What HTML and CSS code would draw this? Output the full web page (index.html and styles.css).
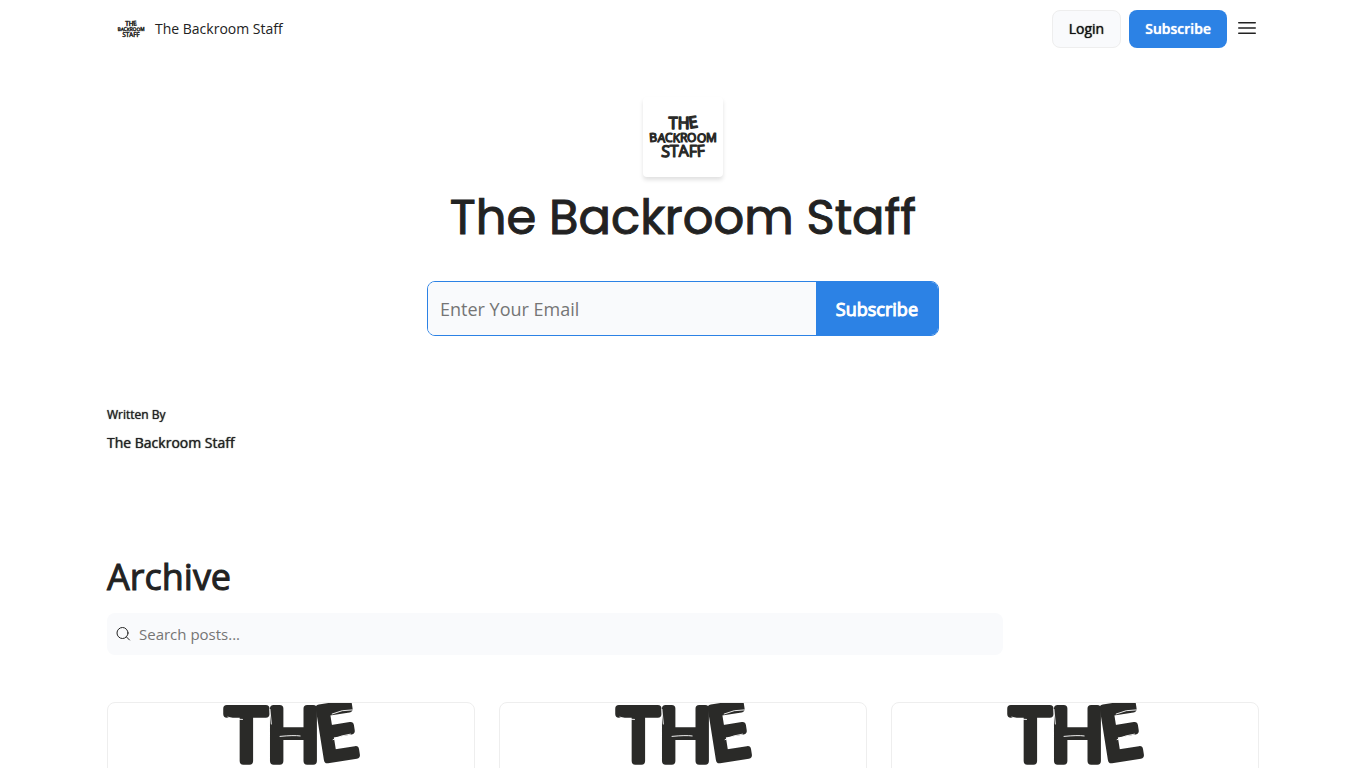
FILE: index.html
```html
<!DOCTYPE html>
<html lang="en">
  <head>
    <meta charset="UTF-8" />
    <meta name="viewport" content="width=device-width, initial-scale=1.0" />
    <title>The Backroom Staff</title>
    <link rel="stylesheet" href="styles.css">
  </head>
  <body>
    <!-- shared logo -->
    <svg class="sprite" aria-hidden="true">
      <symbol id="logo" viewBox="0 0 800 800" preserveAspectRatio="xMidYMid slice">
        <g class="logo-art">
          <text class="logo-the" x="406" y="316" rotate="0 0 -9">THE</text>
          <text class="logo-backroom" x="402" y="450" rotate="-4 3 0 3 0 -3 3 0">BACKROOM</text>
          <text class="logo-staff" x="402" y="597" rotate="3 0 -3 0 -4">STAFF</text>
        </g>
        <!-- dry brush streaks -->
        <g class="logo-streaks">
          <path d="M262 221q14 6 32 5" />
          <path d="M354 204l3 32" />
          <path d="M376 263q30 -3 44 -1" />
          <path d="M490 214q22 -10 44 -9" />
          <path d="M492 270q18 -10 38 -12" />
        </g>
      </symbol>
    </svg>

    <header class="navbar">
      <a class="brand" href="#">
        <svg class="brand-logo" aria-hidden="true"><use href="#logo" /></svg>
        <span>The Backroom Staff</span>
      </a>
      <div class="nav-actions">
        <button class="btn btn-light" type="button">Login</button>
        <button class="btn btn-primary" type="button">Subscribe</button>
        <button class="menu-btn" type="button" aria-label="Menu">
          <svg width="24" height="24" viewBox="0 0 24 24" fill="none" stroke="currentColor" stroke-width="1.5" stroke-linecap="round">
            <path d="M3.75 5.75h16.5M3.75 11h16.5M3.75 16.25h16.5" />
          </svg>
        </button>
      </div>
    </header>

    <main class="container">
      <section class="hero">
        <svg class="hero-logo" aria-hidden="true"><use href="#logo" /></svg>
        <h1>The Backroom Staff</h1>
        <form class="subscribe-form">
          <input type="email" placeholder="Enter Your Email" aria-label="Email" required />
          <button type="submit">Subscribe</button>
        </form>
      </section>

      <section class="authors">
        <p class="authors-label">Written By</p>
        <p class="authors-name">The Backroom Staff</p>
      </section>

      <section class="archive">
        <h2>Archive</h2>
        <label class="search">
          <svg width="16" height="16" viewBox="0 0 16 16" fill="none" stroke="currentColor" stroke-linecap="round">
            <circle cx="7.5" cy="7" r="5.5" />
            <path d="M11.5 11l3 3" />
          </svg>
          <input type="text" placeholder="Search posts..." aria-label="Search posts" />
        </label>
        <div class="posts">
          <a class="post" href="#" aria-label="Post"><svg class="post-image"><use href="#logo" /></svg></a>
          <a class="post" href="#" aria-label="Post"><svg class="post-image"><use href="#logo" /></svg></a>
          <a class="post" href="#" aria-label="Post"><svg class="post-image"><use href="#logo" /></svg></a>
        </div>
      </section>
    </main>
  </body>
</html>
```
FILE: styles.css
```css
* {
  box-sizing: border-box;
}

body {
  margin: 0;
  font-family: "Open Sans", "Noto Sans", sans-serif;
  font-size: 14px;
  line-height: 20px;
  color: #222;
  background-color: #fff;
}

h1,
h2,
p {
  margin: 0;
}

button,
input {
  font-family: inherit;
}

button {
  cursor: pointer;
}

.sprite {
  display: none;
}

.logo-art {
  font-family: "Open Sans", sans-serif;
  font-weight: 400;
  fill: #2a2a28;
  stroke: #2a2a28;
  stroke-width: 12;
  stroke-linecap: round;
  stroke-linejoin: round;
  text-anchor: middle;
}

.logo-the {
  font-size: 160px;
  stroke-width: 16;
}

.logo-backroom {
  font-size: 120px;
}

.logo-staff {
  font-size: 160px;
}

.logo-streaks {
  fill: none;
  stroke: #fff;
  stroke-width: 2;
  stroke-linecap: round;
}

.navbar,
.container {
  max-width: 1152px;
  margin: 0 auto;
}

.navbar {
  display: flex;
  align-items: center;
  justify-content: space-between;
  height: 57px;
  padding: 0 0 0 8px;
}

.brand {
  display: flex;
  align-items: center;
  gap: 8px;
  color: inherit;
  text-decoration: none;
}

.brand-logo {
  width: 32px;
  height: 32px;
}

.nav-actions {
  display: flex;
  align-items: center;
  gap: 8px;
}

.btn {
  height: 38px;
  padding: 0 16px;
  border: 1px solid transparent;
  border-radius: 8px;
  font-size: 14px;
  font-weight: 400;
  line-height: 20px;
  text-shadow: 0 0 1px currentColor;
}

.btn-light {
  background-color: #f9fafc;
  border-color: #eee;
  color: #111;
}

.btn-primary {
  padding: 0 15px;
  background-color: #2c82e5;
  color: #fff;
  font-weight: 600;
}

.menu-btn {
  display: flex;
  padding: 0;
  border: none;
  background: none;
  color: #222;
}

.hero {
  display: flex;
  flex-direction: column;
  align-items: center;
  padding: 40px 0 64px;
}

.hero-logo {
  width: 80px;
  height: 80px;
  border-radius: 4px;
  box-shadow: 0 3px 4px rgba(0, 0, 0, 0.12);
}

.hero h1 {
  margin: 9px 0 31px;
  font-family: Poppins, Inter, sans-serif;
  font-size: 48px;
  font-weight: 400;
  line-height: 64px;
  -webkit-text-stroke: 1px currentColor;
}

.subscribe-form {
  display: flex;
  width: 100%;
  max-width: 512px;
  height: 55px;
  border: 1px solid #2c82e5;
  border-radius: 8px;
  overflow: hidden;
}

.subscribe-form input {
  flex: 1;
  min-width: 0;
  padding: 0 12px;
  border: none;
  background-color: #f9fafc;
  font-size: 18px;
}

.subscribe-form button {
  padding: 0 20px;
  border: none;
  background-color: #2c82e5;
  color: #fff;
  font-size: 18px;
  font-weight: 400;
  -webkit-text-stroke: 1px currentColor;
}

input::placeholder {
  color: #757575;
}

.authors {
  display: flex;
  flex-direction: column;
  gap: 8px;
  padding: 5px 0 100px;
  text-shadow: 0 0 1px currentColor;
}

.authors-label {
  font-size: 12px;
}

.archive h2 {
  margin-bottom: 12px;
  font-size: 36px;
  font-weight: 400;
  line-height: 48px;
  -webkit-text-stroke: 1px currentColor;
}

.search {
  display: flex;
  align-items: center;
  gap: 8px;
  max-width: 896px;
  height: 42px;
  padding: 0 8px;
  border-radius: 8px;
  background-color: #f9fafc;
}

.search input {
  flex: 1;
  padding: 0;
  border: none;
  background: none;
  font-size: 15px;
}

.posts {
  display: grid;
  grid-template-columns: repeat(3, 1fr);
  gap: 24px;
  margin-top: 47px;
}

.post {
  border: 1px solid #eee;
  border-radius: 8px;
  overflow: hidden;
}

.post-image {
  display: block;
  width: 100%;
  aspect-ratio: 40 / 21;
}
```
